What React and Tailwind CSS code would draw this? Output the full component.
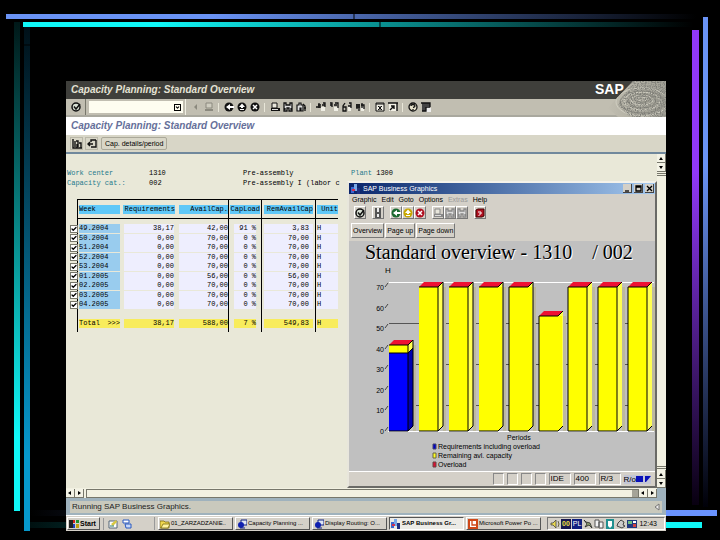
import { Check, ChevronDown } from 'lucide-react';

const ROWS = [
  { week: '49.2004', req: '38,17', avail: '42,00', load: '91', rem: '3,83' },
  { week: '50.2004', req: '0,00', avail: '70,00', load: '0', rem: '70,00' },
  { week: '51.2004', req: '0,00', avail: '70,00', load: '0', rem: '70,00' },
  { week: '52.2004', req: '0,00', avail: '70,00', load: '0', rem: '70,00' },
  { week: '53.2004', req: '0,00', avail: '70,00', load: '0', rem: '70,00' },
  { week: '01.2005', req: '0,00', avail: '56,00', load: '0', rem: '56,00' },
  { week: '02.2005', req: '0,00', avail: '70,00', load: '0', rem: '70,00' },
  { week: '03.2005', req: '0,00', avail: '70,00', load: '0', rem: '70,00' },
  { week: '04.2005', req: '0,00', avail: '70,00', load: '0', rem: '70,00' },
];

// left / front / side: which vertical edges of the bar are outlined
const BARS = [
  { x: 41, blue: 38, total: 42, side: true },
  { x: 71, total: 70, front: true, side: true },
  { x: 101, total: 70, front: true, side: true },
  { x: 131, total: 70, side: true },
  { x: 161, total: 70, left: true, side: true },
  { x: 191, total: 56, left: true },
  { x: 220, total: 70, left: true, front: true },
  { x: 250, total: 70, left: true, front: true },
  { x: 280, total: 70, left: true, front: true },
];

const TOOLBAR = [
  [
    { name: 'Back one', icon: 'tri', off: true },
    { name: 'Save', icon: 'save', off: true },
  ],
  [
    { name: 'Back', icon: 'back' },
    { name: 'Exit', icon: 'exit' },
    { name: 'Cancel', icon: 'cancel' },
  ],
  [
    { name: 'Print', icon: 'print' },
    { name: 'Find', icon: 'find' },
    { name: 'Find next', icon: 'findNext' },
  ],
  [
    { name: 'First page', icon: 'pageFirst' },
    { name: 'Previous page', icon: 'pageUp' },
    { name: 'Next page', icon: 'pageDown' },
    { name: 'Last page', icon: 'pageLast' },
  ],
  [
    { name: 'New session', icon: 'session' },
    { name: 'Create shortcut', icon: 'shortcut' },
  ],
  [
    { name: 'Help', icon: 'help' },
    { name: 'Customize layout', icon: 'layout' },
  ],
];

const Icon = ({ name, tone = '#111' }) => {
  const shapes = {
    tri: <path d="M6 2v6L3 5z" fill="#8b897e" />,
    enter: (
      <>
        <circle cx="5" cy="5" r="4" fill="#d8e0d4" stroke={tone} strokeWidth="1.5" />
        <path d="M3 4.5l2 2.5 4-5" fill="none" stroke={tone} strokeWidth="1.5" />
      </>
    ),
    save: (
      <>
        <path d="M2 1h6v5H2z" fill="#cfcdc0" stroke={tone} />
        <path d="M1 7h8v2H1z" fill={tone} />
      </>
    ),
    back: (
      <>
        <circle cx="5" cy="5" r="4.5" fill={tone} />
        <path d="M10 4H6V2L2 5l4 3V6h4z" fill="#fff" />
      </>
    ),
    exit: (
      <>
        <circle cx="5" cy="5" r="4.5" fill={tone} />
        <path d="M5 1.5L2 5h2v1h2V5h2zM3 7h4v1H3z" fill="#fff" />
      </>
    ),
    cancel: (
      <>
        <circle cx="5" cy="5" r="4.5" fill={tone} />
        <path d="M3 3l4 4M7 3L3 7" stroke="#fff" strokeWidth="1.5" />
      </>
    ),
    print: (
      <>
        <path d="M2 1h5v5H2z" fill="#e8e6dc" stroke={tone} />
        <path d="M1 6h9v3H1z" fill={tone} />
        <path d="M2 7.5h6" stroke="#ddd" />
      </>
    ),
    find: <path d="M1 1h2v2h4V1h2v8H6V6H4v3H1zM2 6v2M8 6v2" fill="#ddd" stroke={tone} strokeWidth="1.3" />,
    findNext: (
      <>
        <path d="M1 3h2V1h2v2h2v6H5V6H4v3H1z" fill="#ddd" stroke={tone} strokeWidth="1.2" />
        <path d="M7 2l2 2v5M8 6h2" fill="none" stroke={tone} strokeWidth="1.3" />
      </>
    ),
    pageFirst: (
      <>
        <path d="M5 5h4v4H5z" fill="#efeee4" />
        <path d="M3 1v5M0 5h5M2 3h3M7 1h2v4M6 3h3" fill="none" stroke={tone} strokeWidth="1.3" />
      </>
    ),
    pageUp: (
      <>
        <path d="M5 5h4v4H5z" fill="#efeee4" />
        <path d="M1 1h2v4M1 3h2M6 1h3v5M5 3h3" fill="none" stroke={tone} strokeWidth="1.3" />
      </>
    ),
    pageDown: (
      <>
        <path d="M6 4h3v5H6z" fill="#efeee4" />
        <path d="M3 1L1 4v5h3V5H1M7 1h2v5M6 4h3" fill="none" stroke={tone} strokeWidth="1.3" />
      </>
    ),
    pageLast: (
      <>
        <path d="M6 5h3v4H6z" fill="#efeee4" />
        <path d="M1 3h4M1 5h4M2 2v5M4 2v7M7 1v5M6 3h3v4" fill="none" stroke={tone} strokeWidth="1.3" />
      </>
    ),
    session: (
      <>
        <path d="M1 1h8v8H1z" fill="#f3f1e6" stroke={tone} />
        <path d="M1 2h8M3 4l4 4M7 4L3 8M5 4v4" stroke={tone} strokeWidth="1" />
      </>
    ),
    shortcut: (
      <>
        <path d="M1 1h8v8H1z" fill="#f3f1e6" />
        <path d="M0 1h10M9 1v8M2 8l4-4M3 4h3v3" fill="none" stroke={tone} strokeWidth="1.4" />
      </>
    ),
    help: (
      <>
        <circle cx="5" cy="5" r="4" fill="#e8e4cc" stroke={tone} strokeWidth="1.3" />
        <path d="M3 4q0-1.500 2-1.500t2 1.500q0 1-2 1.500M5 7v1" fill="none" stroke={tone} strokeWidth="1.3" />
      </>
    ),
    layout: (
      <>
        <path d="M1 1h8v8H1z" fill="#444" />
        <path d="M5 6h5v4H5z" fill="#eee" />
        <path d="M0 1h9v4M1 9h4V5" fill="none" stroke={tone} strokeWidth="1.3" />
      </>
    ),
    chart: <path d="M1 0v9h9M3 2v6M5 5v4M4 2h2v6M7 4h2v5" fill="none" stroke={tone} strokeWidth="1.4" />,
    refresh: <path d="M9 1H4v2M4 8h5V1M1 5h5M3 3L1 5l2 2" fill="none" stroke={tone} strokeWidth="1.4" />,
    stopHelp: (
      <>
        <path d="M1 2l2-1h6v7l-2 1H1z" fill="#b01020" stroke="#400" />
        <path d="M3 4h3v2H4M4 7v1" fill="none" stroke="#fff" />
      </>
    ),
    disk: (
      <>
        <path d="M2 0h6v10H2z" fill="#555" />
        <path d="M4 0h2v4H4zM4 6h2v3H4z" fill="#eee" />
      </>
    ),
    folder: (
      <>
        <path d="M0 2h4l1 1h4v6H0z" fill="#f0d850" stroke="#7a6a10" strokeWidth="0.800" />
        <path d="M1 9l2-4h7L8 9z" fill="#fff3a0" stroke="#7a6a10" strokeWidth="0.800" />
      </>
    ),
    sapgui: (
      <>
        <path d="M4 1h6v5H4z" fill="#dfe6f5" stroke="#102080" />
        <circle cx="4" cy="6" r="3" fill="#1020b0" />
        <path d="M3 9h5" stroke="#102080" />
      </>
    ),
    graphic: (
      <>
        <path d="M0 3h3v6H0z" fill="#3a66d0" />
        <path d="M3 0h3v7H3z" fill="#7aa8e8" />
        <path d="M6 4h3v6H6z" fill="#203080" />
        <path d="M1 5h3v2H1z" fill="#d03050" />
      </>
    ),
    powerpoint: (
      <>
        <path d="M0 0h10v10H0z" fill="#d04818" />
        <path d="M2 2h6v6H2z" fill="#fff" />
        <path d="M4 2v4h4" fill="none" stroke="#d04818" strokeWidth="1.3" />
      </>
    ),
    windows: (
      <>
        <path d="M0 1h4v8H0z" fill="#222" />
        <path d="M4 1h2v3H4z" fill="#d02020" />
        <path d="M7 1h3v3H7z" fill="#209030" />
        <path d="M4 5h2v4H4z" fill="#2040c0" />
        <path d="M7 5h3v4H7z" fill="#c0a010" />
      </>
    ),
    note: (
      <>
        <path d="M1 2h8v7H1z" fill="#fff" stroke="#567" />
        <path d="M3 5l5-4 1 2-4 4z" fill="#d8c840" />
        <path d="M2 7h4" stroke="#2a7a60" />
      </>
    ),
    desk: (
      <>
        <path d="M1 1h6v3H1z" fill="#fff" stroke="#2858c0" />
        <path d="M3 5h6v4H4z" fill="#c8d8f8" stroke="#2858c0" />
      </>
    ),
    speaker: <path d="M1 4h2l3-3v8L3 6H1zM8 2q2 3 0 6" fill="#e8d850" stroke="#444" strokeWidth="0.800" />,
    clip: <path d="M1 1l3 4-2 3 4-2 3 3-2-5-4-1z" fill="#90a070" stroke="#222" strokeWidth="0.800" />,
    pages: <path d="M1 1h4v7H1zM5 3h4v6H5z" fill="#f4f4f4" stroke="#555" strokeWidth="1" />,
    shield: (
      <>
        <path d="M1 0h8v10H1z" fill="#209090" />
        <path d="M3 2h4v5L5 9 3 7z" fill="#fff" />
      </>
    ),
    printer: <path d="M2 4l3-3 3 2-1 3 2 1-3 2-5-2z" fill="#ccc" stroke="#444" strokeWidth="1" />,
    monitor: (
      <>
        <path d="M0 1h10v8H0z" fill="#203880" />
        <path d="M1 2h4v3H1z" fill="#70c080" />
        <path d="M6 5h3v3H6z" fill="#d04040" />
        <path d="M6 2h3v2H6z" fill="#fff" />
      </>
    ),
  };
  return (
    <svg viewBox="0 0 10 10" className="size-[10px] shrink-0" aria-hidden="true">
      {shapes[name]}
    </svg>
  );
};

const SlideFrame = () => (
  <svg
    viewBox="0 0 720 540"
    preserveAspectRatio="none"
    className="absolute inset-0 size-full"
    aria-hidden="true"
  >
    <defs>
      <linearGradient id="topBlue">
        <stop offset="0.3" stopColor="#6a93f5" />
        <stop offset="1" stopColor="#000" />
      </linearGradient>
      <linearGradient id="topCyan">
        <stop offset="0.2" stopColor="#10f8f8" />
        <stop offset="1" stopColor="#000" />
      </linearGradient>
      <linearGradient id="leftCyan" x1="0" y1="0" x2="0" y2="1">
        <stop offset="0" stopColor="#001818" />
        <stop offset="0.85" stopColor="#10f8f8" />
      </linearGradient>
      <linearGradient id="leftBlue" x1="0" y1="0" x2="0" y2="1">
        <stop offset="0" stopColor="#001018" />
        <stop offset="0.85" stopColor="#0698cc" />
      </linearGradient>
      <linearGradient id="rightPurple" x1="0" y1="0" x2="0" y2="1">
        <stop offset="0.3" stopColor="#9038f8" />
        <stop offset="1" stopColor="#080010" />
      </linearGradient>
      <linearGradient id="rightBlue" x1="0" y1="0" x2="0" y2="1">
        <stop offset="0.3" stopColor="#6a93f5" />
        <stop offset="1" stopColor="#000008" />
      </linearGradient>
      <linearGradient id="bottomBlue">
        <stop offset="0" stopColor="#000" />
        <stop offset="0.9" stopColor="#6a93ff" />
      </linearGradient>
      <linearGradient id="bottomCyan">
        <stop offset="0" stopColor="#001010" />
        <stop offset="0.9" stopColor="#10f8f8" />
      </linearGradient>
    </defs>
    <rect x="6" y="14" width="690" height="5" fill="url(#topBlue)" />
    <rect x="14" y="22" width="6" height="489" fill="url(#leftCyan)" />
    <rect x="24" y="27" width="6" height="504" fill="url(#leftBlue)" />
    <rect x="23" y="22" width="670" height="5" fill="url(#topCyan)" />
    <rect x="692" y="30" width="7" height="475" fill="url(#rightPurple)" />
    <rect x="703" y="17" width="5" height="490" fill="url(#rightBlue)" />
    <rect x="30" y="510" width="687" height="6" fill="url(#bottomBlue)" />
    <rect x="30" y="522" width="672" height="6" fill="url(#bottomCyan)" />
    <path d="M354 14v5M380 22v5M24 45h6" stroke="#000" strokeWidth="1" />
  </svg>
);

const SapLogo = () => (
  <svg viewBox="0 0 72 36" className="absolute top-0 right-0 h-[36px] w-[72px]" role="img" aria-label="SAP">
    <defs>
      <filter id="grain" x="0" y="0" width="1" height="1">
        <feTurbulence type="fractalNoise" baseFrequency="0.800" numOctaves="2" seed="4" />
        <feColorMatrix values="0 0 0 0 0.2  0 0 0 0 0.2  0 0 0 0 0.18  3 0 0 0 -1.200" />
        <feComposite in2="SourceGraphic" operator="in" />
      </filter>
      <linearGradient id="pond">
        <stop offset="0.2" stopColor="#c0bdb0" />
        <stop offset="0.6" stopColor="#b0aea2" />
        <stop offset="1" stopColor="#a3a298" />
      </linearGradient>
      <clipPath id="pondClip">
        <path d="M39 0h33v36H24L14 27l8-9z" />
      </clipPath>
    </defs>
    <g clipPath="url(#pondClip)">
      <path d="M0 0h72v36H0z" fill="url(#pond)" />
      <g fill="none" stroke="#cfcdc0" strokeWidth="1">
        <ellipse cx="48" cy="18" rx="5" ry="2" />
        <ellipse cx="48" cy="19" rx="11" ry="5" />
        <ellipse cx="48" cy="20" rx="18" ry="9" />
        <ellipse cx="48" cy="21" rx="26" ry="14" />
      </g>
      <g fill="none" stroke="#8b8a80" strokeWidth="1">
        <ellipse cx="48" cy="18" rx="8" ry="3" />
        <ellipse cx="48" cy="20" rx="14" ry="7" />
        <ellipse cx="48" cy="21" rx="22" ry="11" />
      </g>
      <path d="M39 0h33v36H36L24 24z" filter="url(#grain)" />
    </g>
    <text x="1" y="13" fill="#fff" className="font-['Liberation_Sans',sans-serif] text-[14px] font-bold">
      SAP
    </text>
  </svg>
);

const ArrowButton = ({ dir, label }) => {
  const paths = { up: 'M1 5h4L3 2z', down: 'M1 2h4L3 5z', left: 'M4 1v4L1 3z', right: 'M2 1v4l3-2z' };
  return (
    <button
      aria-label={label}
      className="grid size-[9px] shrink-0 place-items-center border-r border-b border-[#77776b] bg-[#f4f3e6]"
    >
      <svg viewBox="0 0 6 6" className="size-[6px]">
        <path d={paths[dir]} fill="#000" />
      </svg>
    </button>
  );
};

const HeaderCell = ({ children, className = '' }) => (
  <th className={`border-y border-t-black border-b-black p-0 font-normal ${className}`}>
    <div className="h-[9px] bg-[#5fc8f8] whitespace-nowrap">{children}</div>
  </th>
);

const Spacer = ({ className }) => (
  <tr className={className}>
    <td className="p-0"></td>
    <td className="border-l border-black p-0"></td>
    <td className="p-0"></td>
    <td className="border-r border-black p-0"></td>
    <td className="border-r border-black p-0"></td>
    <td className="border-r border-black p-0"></td>
    <td className="p-0"></td>
  </tr>
);

const CapacityTable = () => (
  <table className="ml-[4px] w-[268px] table-fixed border-separate border-spacing-0 text-right">
    <colgroup>
      <col className="w-[7px]" />
      <col className="w-[45px]" />
      <col className="w-[54px]" />
      <col className="w-[53px]" />
      <col className="w-[33px]" />
      <col className="w-[54px]" />
      <col className="w-[22px]" />
    </colgroup>
    <thead>
      <tr className="h-[20px]">
        <td className="p-0"></td>
        <HeaderCell className="border-l border-l-black pr-[2px] pl-px text-left">Week</HeaderCell>
        <HeaderCell className="px-px">Requirements</HeaderCell>
        <HeaderCell className="border-r border-r-black pl-[3px]">AvailCap.</HeaderCell>
        <HeaderCell className="border-r border-r-black px-px">CapLoad</HeaderCell>
        <HeaderCell className="border-r border-r-black px-[2px]">RemAvailCap</HeaderCell>
        <HeaderCell className="pl-px">Unit</HeaderCell>
      </tr>
    </thead>
    <tbody>
      <Spacer className="h-[5px]" />
      {ROWS.map((row, i) => (
        <tr key={row.week} className={i % 2 ? 'h-[10px]' : 'h-[9px]'}>
          <td className="p-0">
            <label className="grid size-[8px] overflow-hidden">
              <input
                type="checkbox"
                defaultChecked
                aria-label={`Week ${row.week}`}
                className="col-start-1 row-start-1 size-[8px] appearance-none border border-[#77776b] bg-white"
              />
              <Check strokeWidth={5} className="col-start-1 row-start-1 size-[6px] place-self-center text-black" />
            </label>
          </td>
          <td className="border-l border-black py-0 pr-[2px] pl-px text-left">
            <div className="h-[9px] bg-[#99ccee]">{row.week}</div>
          </td>
          <td className="px-[2px] py-0">
            <div className="h-[9px] bg-[#eeeefe]">{row.req}</div>
          </td>
          <td className="border-r border-black py-0 pr-0 pl-[3px]">
            <div className="h-[9px] bg-[#eeeefe]">{row.avail}</div>
          </td>
          <td className="border-r border-black px-[5px] py-0">
            <div className="h-[9px] bg-[#eeeefe] whitespace-nowrap">{row.load} %</div>
          </td>
          <td className="border-r border-black px-[2px] py-0">
            <div className="h-[9px] bg-[#eeeefe] pr-[4px]">{row.rem}</div>
          </td>
          <td className="py-0 pr-0 pl-px text-left">
            <div className="h-[9px] bg-[#eeeefe]">H</div>
          </td>
        </tr>
      ))}
      <Spacer className="h-[9px]" />
      <tr className="h-[10px]">
        <td className="p-0"></td>
        <td className="border-l border-black py-0 pr-[2px] pl-px">
          <div className="flex h-[9px] justify-between bg-[#f8ec5c]">
            <span>Total</span>
            <span>&gt;&gt;&gt;</span>
          </div>
        </td>
        <td className="px-[2px] py-0">
          <div className="h-[9px] bg-[#f8ec5c]">38,17</div>
        </td>
        <td className="border-r border-black py-0 pr-0 pl-[3px]">
          <div className="h-[9px] bg-[#f8ec5c]">588,00</div>
        </td>
        <td className="border-r border-black px-[5px] py-0">
          <div className="h-[9px] bg-[#f8ec5c]">7 %</div>
        </td>
        <td className="border-r border-black px-[2px] py-0">
          <div className="h-[9px] bg-[#f8ec5c] pr-[4px]">549,83</div>
        </td>
        <td className="py-0 pr-0 pl-px text-left">
          <div className="h-[9px] bg-[#f8ec5c]">H</div>
        </td>
      </tr>
      <Spacer className="h-[4px]" />
    </tbody>
  </table>
);

const BASE = 167;
const yOf = (value) => BASE - Math.round((value * 144) / 70);

const Bar = ({ x, total, blue = 0, left, front, side }) => {
  const top = yOf(total);
  const mid = yOf(blue);
  const r = x + 19;
  return (
    <g>
      <path d={`M${r + 5} ${top}h3V${BASE}h-3z`} fill="#bdb9a0" />
      <path d={`M${r} ${top}l5 -5V${BASE - 5}l-5 5z`} fill={blue ? '#0000b0' : '#ffff50'} />
      <rect x={x} y={top} width="19" height={BASE - top} fill="#ffff00" />
      {blue > 0 && (
        <>
          <path d={`M${r} ${top}l5 -5V${mid - 5}l-5 5z`} fill="#ffff50" />
          <rect x={x} y={mid} width="19" height={BASE - mid} fill="#0000ff" />
          <path d={`M${x} ${mid}H${r}l5 -5`} fill="none" stroke="#000" />
        </>
      )}
      {!front && !blue && <path d={`M${r - 1} ${top}h5V${BASE - 4}l-5 4z`} fill="#ffff00" />}
      <path d={`M${x} ${top}l5 -5h19l-5 5z`} fill="#ee1133" />
      <path d={`M${x} ${top}H${r}l5 -5M${x} ${BASE}H${r}l5 -5`} fill="none" stroke="#000" />
      {left && <path d={`M${x} ${top}V${BASE}`} stroke="#000" />}
      {(front || blue > 0) && <path d={`M${r} ${top}V${BASE}`} stroke="#000" />}
      {side && <path d={`M${r + 5} ${top - 5}V${BASE - 5}`} stroke="#000" />}
    </g>
  );
};

const BarChart = () => (
  <svg
    viewBox="1 0 306 206"
    className="block w-full font-['Liberation_Sans',sans-serif] text-[7px]"
    role="img"
    aria-label="Capacity per week in hours"
  >
    <text x="37" y="9" className="text-[8px]">H</text>
    <path d="M41 18.500h265" stroke="#fff" />
    <path d="M41 59.500h265M41 100.500h265M41 141.500h265" stroke="#555" />
    <path d="M40 167.500h266" stroke="#fff" />
    {[0, 10, 20, 30, 40, 50, 60, 70].map((v) => (
      <g key={v}>
        <text x="36" y={yOf(v) + 3} textAnchor="end">{v}</text>
        <path d={`M37 ${yOf(v)}l3 -4`} stroke="#444" strokeWidth="1" />
      </g>
    ))}
    {BARS.map((bar) => (
      <Bar key={bar.x} {...bar} />
    ))}
    <text x="159" y="176">Periods</text>
    <path d="M85 180h3v5h-3z" fill="#0000c8" stroke="#446" strokeWidth="1" />
    <path d="M85 189h3v5h-3z" fill="#ffff20" stroke="#664" strokeWidth="1" />
    <path d="M85 198h3v5h-3z" fill="#dd1133" stroke="#644" strokeWidth="1" />
    <text x="90" y="185">Requirements including overload</text>
    <text x="90" y="194">Remaining avl. capacity</text>
    <text x="90" y="203">Overload</text>
  </svg>
);

const ToolButton = ({ label, children, disabled }) => (
  <button
    aria-label={label}
    disabled={disabled}
    className="grid h-[13px] w-[12px] place-items-center border border-t-white border-r-[#777] border-b-[#777] border-l-white"
  >
    {children}
  </button>
);

const GraphicsWindow = () => (
  <section className="flex flex-1 flex-col border-2 border-t-[#f4f2ea] border-r-[#6a6a66] border-b-[#6a6a66] border-l-[#e8e6dc] bg-[#d4d0c8] text-[7px] leading-[9px]">
    <div className="flex h-[11px] items-center gap-[2px] bg-linear-to-r from-[#0a246a] to-[#a6caf0] pr-px pl-[2px]">
      <Icon name="graphic" />
      <h2 className="flex-1 text-white">SAP Business Graphics</h2>
      {['M1 6h4', 'M1 1h5v5H1zM1 2h5', 'M1 1l5 5M6 1L1 6'].map((d, i) => (
        <button
          key={d}
          aria-label={['Minimize', 'Maximize', 'Close'][i]}
          className="grid h-[9px] w-[9px] place-items-center border-r border-b border-[#444] bg-[#d4d0c8]"
        >
          <svg viewBox="0 0 7 7" className="size-[7px]">
            <path d={d} fill="none" stroke="#000" strokeWidth="1.3" />
          </svg>
        </button>
      ))}
    </div>

    <nav className="flex h-[11px] items-center gap-[5px] pl-[3px]">
      <button>Graphic</button>
      <button>Edit</button>
      <button>Goto</button>
      <button>Options</button>
      <button disabled className="text-[#999]">Extras</button>
      <button>Help</button>
    </nav>

    <div className="flex h-[15px] items-center pl-[5px]">
      <ToolButton label="Enter"><Icon name="enter" /></ToolButton>
      <span className="w-[6px]"></span>
      <ToolButton label="Save"><Icon name="disk" /></ToolButton>
      <span className="w-[6px]"></span>
      <ToolButton label="Back"><Icon name="back" tone="#1a6a30" /></ToolButton>
      <ToolButton label="Exit"><Icon name="exit" tone="#c8a800" /></ToolButton>
      <ToolButton label="Cancel"><Icon name="cancel" tone="#b01020" /></ToolButton>
      <span className="w-[6px]"></span>
      <ToolButton label="Print" disabled><Icon name="print" tone="#888" /></ToolButton>
      <ToolButton label="Find" disabled><Icon name="find" tone="#888" /></ToolButton>
      <ToolButton label="Find next" disabled><Icon name="find" tone="#888" /></ToolButton>
      <span className="w-[6px]"></span>
      <ToolButton label="Help"><Icon name="stopHelp" /></ToolButton>
    </div>

    <div className="flex h-[21px] items-center gap-px pl-[2px]">
      {['Overview', 'Page up', 'Page down'].map((label) => (
        <button
          key={label}
          className="h-[15px] border border-t-white border-r-[#777] border-b-[#777] border-l-white px-px"
        >
          {label}
        </button>
      ))}
    </div>

    <div className="flex-1 bg-[#c0c0c0]">
      <h3 className="flex h-[23px] items-center gap-[20px] pl-[16px] font-['Liberation_Serif',serif] text-[20px] leading-[23px] whitespace-nowrap [text-shadow:1px_1px_0_#fff]">
        <span>Standard overview - 1310</span>
        <span>/ 002</span>
      </h3>
      <BarChart />
    </div>

    <div className="flex h-[15px] items-center justify-end gap-[3px] border-t border-white pr-[4px]">
      {[0, 1, 2, 3].map((n) => (
        <span key={n} className="h-[12px] w-[11px] border border-t-[#888] border-r-white border-b-white border-l-[#888]"></span>
      ))}
      {['IDE', '400', 'R/3'].map((t) => (
        <span key={t} className="h-[12px] w-[22px] border border-t-[#888] border-r-white border-b-white border-l-[#888] pl-px text-[8px]">
          {t}
        </span>
      ))}
      <span className="flex h-[9px] items-center bg-[#c4c6d4] text-[8px]">
        R/o
        <svg viewBox="0 0 15 8" className="h-[8px] w-[15px]" aria-hidden="true">
          <path d="M0 1h7v6H0zM9 1h6l-5 6H9z" fill="#0a10b8" />
        </svg>
      </span>
    </div>
  </section>
);

const TaskButton = ({ icon, label, active }) => (
  <button
    className={`flex h-[13px] min-w-0 flex-1 items-center gap-px border pl-px text-[6px] whitespace-nowrap ${
      active
        ? 'border-t-[#555] border-r-white border-b-white border-l-[#555] bg-[#ecebe6] font-bold'
        : 'border-t-white border-r-[#555] border-b-[#555] border-l-white'
    }`}
  >
    <Icon name={icon} />
    {label}
  </button>
);

const Taskbar = () => (
  <footer className="flex h-[16px] items-center gap-[3px] border-t border-white bg-[#d4d0c8] px-px text-[7px] leading-[9px]">
    <button className="flex h-[13px] w-[33px] items-center gap-px border border-t-white border-r-[#555] border-b-[#555] border-l-white pl-px text-[7px] font-bold">
      <Icon name="windows" />
      Start
    </button>
    <div className="flex h-[12px] w-[48px] items-center gap-[4px] border-l border-[#999] pl-[4px]">
      <button aria-label="Notes"><Icon name="note" /></button>
      <button aria-label="Show desktop"><Icon name="desk" /></button>
    </div>
    <nav className="flex min-w-0 flex-1 gap-[2px] border-l border-[#999] pl-[3px]">
      <TaskButton icon="folder" label="01_ZARZADZANIE.." />
      <TaskButton icon="sapgui" label="Capacity Planning ..." />
      <TaskButton icon="sapgui" label="Display Routing: O..." />
      <TaskButton icon="graphic" label="SAP Business Gr..." active />
      <TaskButton icon="powerpoint" label="Microsoft Power Po ..." />
    </nav>
    <div className="ml-[3px] flex h-[13px] w-[118px] items-center gap-px border border-t-[#777] border-r-white border-b-white border-l-[#777] pl-[2px]">
      <Icon name="speaker" />
      <span className="h-[10px] w-[10px] bg-[#181850] text-center font-bold text-[#f0e040]">00</span>
      <span className="h-[10px] w-[10px] bg-[#102080] text-center text-white">PL</span>
      <Icon name="clip" />
      <Icon name="pages" />
      <Icon name="shield" />
      <Icon name="printer" />
      <Icon name="monitor" />
      <time className="flex-1 pr-[7px] text-right">12:43</time>
    </div>
  </footer>
);

const App = () => (
  <div className="relative flex min-h-screen flex-col bg-black pt-[81px] pr-[54px] pb-[9px] pl-[66px] font-['Liberation_Sans',sans-serif] text-black">
    <SlideFrame />

    <main className="relative flex flex-1 flex-col bg-[#e9e8d8]">
      <header className="relative">
        <h1 className="h-[18px] bg-[#3f3f3b] pl-[5px] text-[10px] leading-[17px] font-bold text-[#e4e2d4] italic">
          Capacity Planning: Standard Overview
        </h1>
        <div className="flex h-[18px] items-center border-b-2 border-[#a9a89e] bg-[#c1beb1] pl-[4px]">
          <button aria-label="Enter" className="grid w-[12px] place-items-center">
            <Icon name="enter" />
          </button>
          <span className="mx-[3px] h-[16px] w-px bg-[#77776b]"></span>
          <div className="flex h-[12px] w-[94px] items-center bg-[#fefdf0] pr-[2px]">
            <input aria-label="Command" className="h-[12px] min-w-0 flex-1 text-[8px] outline-none" />
            <button aria-label="Command history" className="grid size-[7px] place-items-center border border-black">
              <ChevronDown strokeWidth={5} className="size-[5px]" />
            </button>
          </div>
          <span className="mr-[3px] ml-[2px] h-[16px] w-px bg-[#efeee2]"></span>
          {TOOLBAR.map((group, i) => (
            <div key={i} className="flex items-center">
              {i > 0 && <span className="mx-[3px] h-[9px] w-px bg-[#e8e6d8]"></span>}
              {group.map((tool) => (
                <button
                  key={tool.name}
                  aria-label={tool.name}
                  disabled={tool.off}
                  className="grid w-[13px] place-items-center"
                >
                  <Icon name={tool.icon} tone={tool.off ? '#8b897e' : '#111'} />
                </button>
              ))}
            </div>
          ))}
        </div>
        <SapLogo />
      </header>

      <h2 className="h-[18px] bg-white pl-[5px] text-[10px] leading-[18px] font-bold text-[#66709a] italic">
        Capacity Planning: Standard Overview
      </h2>

      <div className="flex h-[19px] items-center gap-[2px] border-b-2 border-[#70889c] bg-[#d8d6c7] pl-[4px]">
        <button aria-label="Graphic" className="grid size-[13px] place-items-center border border-[#b9b7a8]">
          <Icon name="chart" />
        </button>
        <button aria-label="Choose" className="grid size-[13px] place-items-center border border-[#b9b7a8]">
          <Icon name="refresh" />
        </button>
        <button className="ml-px h-[13px] rounded-[2px] border border-[#aaa899] px-[3px] text-[7px] leading-[11px]">
          Cap. details/period
        </button>
      </div>

      <div className="flex flex-1">
        <section className="w-[281px] shrink-0 pt-[15px] font-['Liberation_Mono',monospace] text-[7px] leading-[9px]">
          <div className="mb-[11px] flex flex-col gap-px pl-px whitespace-pre">
            <p className="flex">
              <span className="w-[82px] text-[#1f7a8c]">Work center</span>
              <span className="w-[94px]">1310</span>
              <span>Pre-assembly</span>
            </p>
            <p className="flex">
              <span className="w-[82px] text-[#1f7a8c]">Capacity cat.:</span>
              <span className="w-[94px]">002</span>
              <span>Pre-assembly I (labor c</span>
            </p>
          </div>
          <CapacityTable />
        </section>

        <div className="flex min-w-0 flex-1 flex-col pt-[15px]">
          <p className="h-[12px] pl-[4px] font-['Liberation_Mono',monospace] text-[7px] leading-[9px]">
            <span className="text-[#1f7a8c]">Plant</span> 1300
          </p>
          <GraphicsWindow />
        </div>

        <div className="flex w-[9px] flex-col justify-between bg-[#f2f1e2]">
          <div>
            <ArrowButton dir="up" label="Scroll up" />
            <ArrowButton dir="down" label="Scroll down" />
            <div className="mt-px h-[3px] border-y border-[#77776b]"></div>
          </div>
          <div>
            <div className="mb-px h-[3px] border-y border-[#77776b]"></div>
            <ArrowButton dir="up" label="Page up" />
            <ArrowButton dir="down" label="Page down" />
          </div>
        </div>
      </div>

      <div className="flex h-[10px] items-center bg-[#f2f1e2]">
        <ArrowButton dir="left" label="Scroll left" />
        <ArrowButton dir="right" label="Scroll right" />
        <div className="ml-[2px] flex h-[9px] flex-1 justify-end border border-[#77776b]">
          <span className="w-[6px] bg-[#a5a498]"></span>
        </div>
        <ArrowButton dir="left" label="Page left" />
        <ArrowButton dir="right" label="Page right" />
        <span className="h-[10px] w-[9px] bg-[#9fb2bd]"></span>
      </div>

      <div className="flex h-[17px] items-center bg-[#9fb2bd] px-[4px]">
        <p className="flex h-[12px] flex-1 items-center justify-between bg-[#c9c9bd] px-[2px] text-[8px] leading-[12px] text-[#222]">
          Running SAP Business Graphics.
          <svg viewBox="0 0 6 8" className="h-[8px] w-[6px]" aria-hidden="true">
            <path d="M5 1v6L1 4z" fill="#eee" stroke="#777" />
          </svg>
        </p>
      </div>

      <Taskbar />
    </main>
  </div>
);

export default App;
